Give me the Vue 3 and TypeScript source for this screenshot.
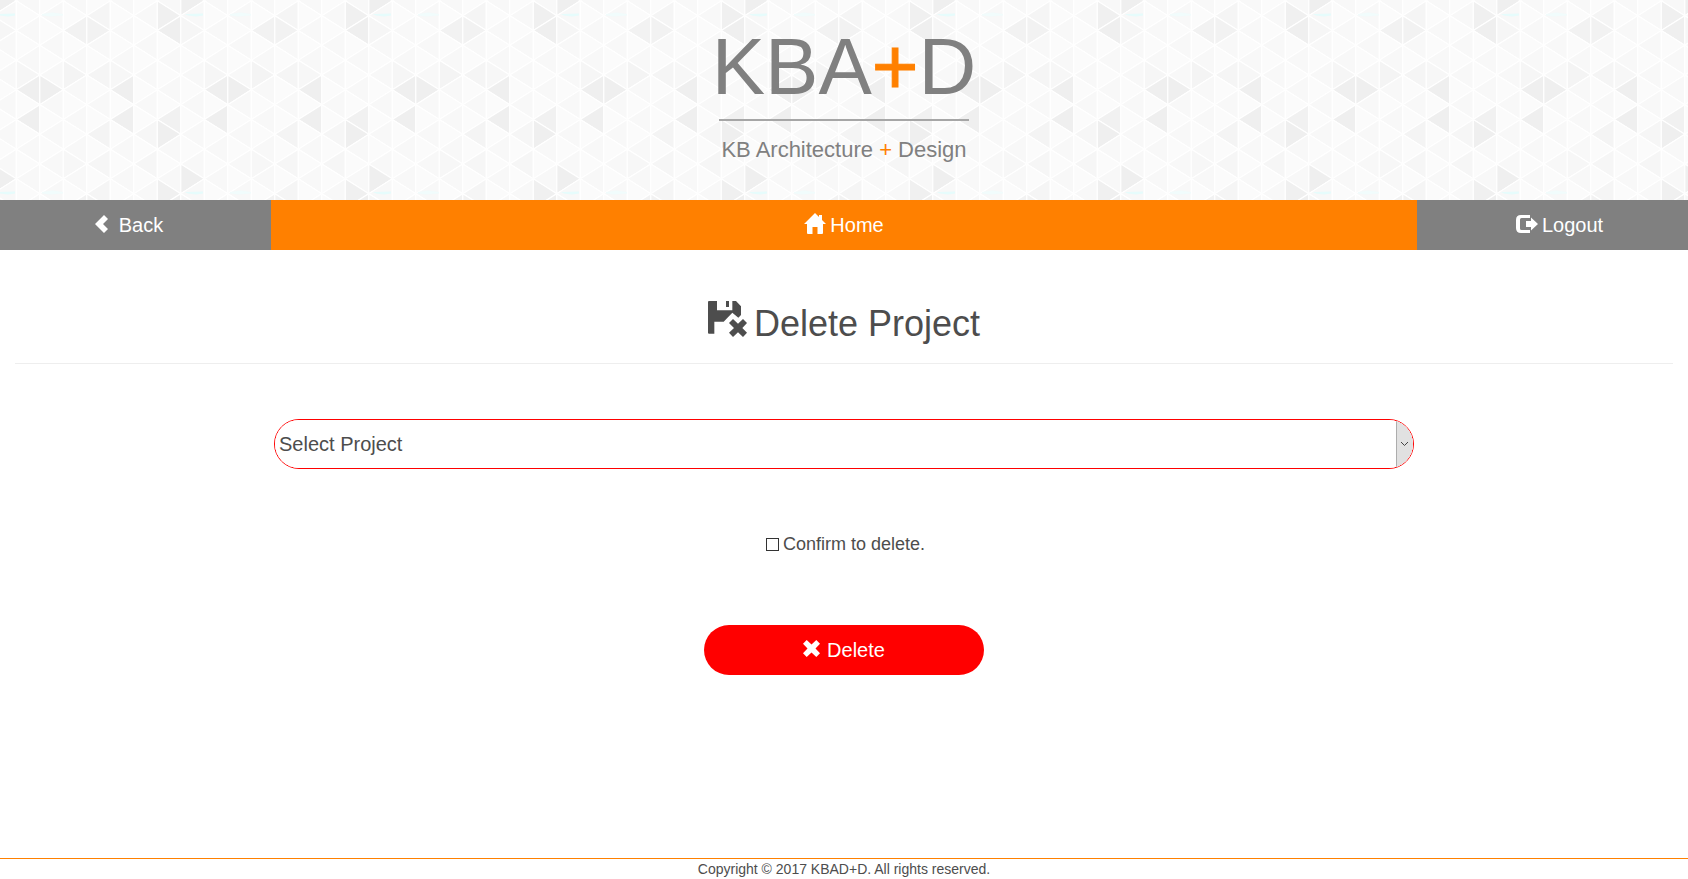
<script setup lang="ts">
import { ref } from 'vue'

interface Facet {
  points: string
  fill: string
}

const TILE_WIDTH = 188
const TILE_HEIGHT = 178
const COLUMN = TILE_WIDTH / 8
const LEVEL = TILE_HEIGHT / 12

// Facets that stand out from the base tint, keyed by "column:level"
const accents: Record<string, string> = {
  '0:5': '#f6f6f6',
  '0:6': '#efefef',
  '0:8': '#efefef',
  '1:6': '#efefef',
  '2:2': '#f2f2f2',
  '2:5': '#f4f4f4',
  '2:11': '#f7f7f7',
  '3:1': '#f5f5f5',
  '3:2': '#f2f2f2',
  '3:5': '#f5f5f5',
  '3:9': '#f4f4f4',
  '3:11': '#f6f6f6',
  '4:5': '#f7f7f7',
  '4:6': '#efefef',
  '4:8': '#efefef',
  '5:9': '#f6f6f6',
  '5:11': '#f6f6f6',
  '6:1': '#f0f0f0',
  '6:2': '#efefef',
  '6:8': '#f1f1f1',
  '6:9': '#efefef',
  '7:0': '#efefef',
  '7:2': '#f6f6f6',
}

function buildFacets(): Facet[] {
  const list: Facet[] = []
  for (let c = -1; c <= 7; c++) {
    for (let n = -1; n <= 13; n++) {
      const left = 16.3 + c * COLUMN
      const right = left + COLUMN
      const y = 0.8 + n * LEVEL
      const pointsLeft = (n + c) % 2 === 0
      const apex = pointsLeft ? left : right
      const base = pointsLeft ? right : left
      const key = `${(c + 8) % 8}:${(n + 12) % 12}`
      list.push({
        points: `${apex},${y} ${base},${y - LEVEL} ${base},${y + LEVEL}`,
        fill: accents[key] ?? (pointsLeft ? '#f8f8f8' : '#fbfbfb'),
      })
    }
  }
  return list
}

const facets = buildFacets()
const project = ref('')
const confirmed = ref(false)
</script>

<template>
  <div class="page">
    <header class="banner">
      <svg class="banner-pattern" aria-hidden="true">
        <defs>
          <pattern id="facets" :width="TILE_WIDTH" :height="TILE_HEIGHT" patternUnits="userSpaceOnUse">
            <polygon
              v-for="(facet, i) in facets"
              :key="i"
              :points="facet.points"
              :fill="facet.fill"
              stroke="#ffffff"
              stroke-width="1.2"
            />
            <path d="M0 14L15 13.500V15.500L8 16.500L0 15.500ZM185 14H188V15.500Z" fill="#e6fcfc" />
            <path d="M42 14L52 12.500L63 14V15.500L50 16.500L42 15.500Z" fill="#f1fcfc" />
          </pattern>
        </defs>
        <rect width="100%" height="100%" fill="url(#facets)" />
      </svg>
      <div class="logo">
        <div class="logo-name">KBA<span class="plus heavy">+</span>D</div>
        <div class="logo-tagline">KB Architecture <span class="plus">+</span> Design</div>
      </div>
    </header>

    <nav class="nav">
      <a class="nav-link back" href="#back">
        <svg class="icon-back" viewBox="0 0 13 18" aria-hidden="true">
          <path d="M9 0L13 4L8 9L13 14L9 18L0 9Z" />
        </svg>
        Back
      </a>
      <a class="nav-link home" href="#home">
        <svg class="icon-home" viewBox="0 0 22 21" aria-hidden="true">
          <path d="M11 0L15 4V2H18V7L22 11H19V20Q19 21 18 21H13.500V14H8.500V21H4Q3 21 3 20V11H0Z" />
        </svg>
        Home
      </a>
      <a class="nav-link logout" href="#logout">
        <svg class="icon-logout" viewBox="0 0 22 18" aria-hidden="true">
          <path d="M14 0V3H5.500Q4 3 4 4.500V13.500Q4 15 5.500 15H14V18H5Q0 18 0 13V5Q0 0 5 0ZM15 2.500L22 9L15 15.500V12H10V6H15Z" />
        </svg>
        Logout
      </a>
    </nav>

    <main class="content">
      <h1 class="title">
        <svg class="icon-project" viewBox="0 0 117 108" aria-hidden="true">
          <path d="M2 0H27V28H73V0H84L99 16V42L91 50L73 35L47 62H19V98H2L0 96V2Z" />
          <path d="M54 0H63V18H54Z" />
          <path d="M75 54L90 68L105 54L117 66L103 81L117 95L105 108L90 94L75 108L63 95L78 81L63 66Z" />
        </svg>
        Delete Project
      </h1>

      <form class="form" @submit.prevent>
        <div class="select-box">
          <select v-model="project" class="select" aria-label="Select Project">
            <option value="">Select Project</option>
          </select>
          <span class="select-arrow" aria-hidden="true">
            <svg viewBox="0 0 9 6"><path d="M1 1L4.500 4.500L8 1" /></svg>
          </span>
        </div>

        <label class="confirm">
          <input v-model="confirmed" class="checkbox" type="checkbox" />
          Confirm to delete.
        </label>

        <button class="delete" type="submit">
          <svg class="icon-delete" viewBox="0 0 17 17" aria-hidden="true">
            <path d="M3.700 0L8.500 4.500L13.300 0L17 3.700L12.500 8.500L17 13.300L13.300 17L8.500 12.500L3.700 17L0 13.300L4.500 8.500L0 3.700Z" />
          </svg>
          Delete
        </button>
      </form>
    </main>

    <footer class="footer">Copyright © 2017 KBAD+D. All rights reserved.</footer>
  </div>
</template>

<style>
body {
  margin: 0;
}
</style>

<style scoped>
.page {
  display: flex;
  flex-direction: column;
  min-height: 100vh;
  background: #ffffff;
  color: #4d4d4d;
  font-family: "Liberation Sans", Arial, sans-serif;
}

.page svg {
  fill: currentColor;
}

.banner {
  position: relative;
  padding: 27px 0 38px;
}

.banner-pattern {
  position: absolute;
  inset: 0;
  width: 100%;
  height: 100%;
}

.logo {
  position: relative;
  display: flex;
  flex-direction: column;
  align-items: center;
  color: #808080;
}

.logo-name {
  font-size: 80px;
  line-height: 80px;
}

.logo-tagline {
  width: 250px;
  margin-top: 12px;
  padding-top: 17px;
  border-top: 2px solid #a6a6a6;
  font-size: 22px;
  line-height: 24px;
  text-align: center;
  white-space: nowrap;
}

.plus {
  color: #ff8000;
}

.heavy {
  -webkit-text-stroke: 1px #ff8000;
}

.nav {
  display: grid;
  grid-template-columns: 1fr min(1146px, 68%) 1fr;
}

.nav-link {
  display: flex;
  align-items: center;
  justify-content: center;
  height: 50px;
  background: #808080;
  color: #ffffff;
  font-size: 20px;
  text-decoration: none;
}

.back {
  gap: 11px;
  padding-right: 13px;
}

.home {
  gap: 4px;
  background: #ff8000;
}

.logout {
  gap: 4px;
  padding-left: 14px;
}

.icon-back {
  width: 13px;
  height: 18px;
  margin-bottom: 2px;
}

.icon-home {
  width: 22px;
  height: 21px;
  margin-bottom: 4px;
}

.icon-logout {
  width: 22px;
  height: 18px;
  margin-bottom: 2px;
}

.content {
  flex: 1;
  padding: 54px 15px 40px;
}

.title {
  display: flex;
  justify-content: center;
  gap: 7px;
  margin: 0;
  padding-bottom: 19px;
  border-bottom: 1px solid #eeeeee;
  font-size: 36px;
  font-weight: 400;
  line-height: 40px;
}

.icon-project {
  width: 39px;
  height: 36px;
  margin-top: -3px;
}

.form {
  display: flex;
  flex-direction: column;
  align-items: center;
  max-width: 1140px;
  margin: 55px auto 0;
}

.select-box {
  position: relative;
  box-sizing: border-box;
  width: 100%;
  height: 50px;
  overflow: hidden;
  border: 1px solid #ff0000;
  border-radius: 25px;
}

.select {
  width: 100%;
  height: 100%;
  padding: 0 20px 0 4px;
  border: 0;
  background: #ffffff;
  color: inherit;
  font: inherit;
  font-size: 20px;
  appearance: none;
}

.select-arrow {
  position: absolute;
  top: 0;
  right: 0;
  bottom: 0;
  display: flex;
  align-items: center;
  justify-content: center;
  box-sizing: border-box;
  width: 17px;
  padding-right: 2px;
  border-left: 1px solid #adadad;
  background: #e1e1e1;
  pointer-events: none;
}

.select-arrow svg {
  width: 9px;
  height: 6px;
  fill: none;
  stroke: #444444;
}

.confirm {
  display: flex;
  align-items: center;
  gap: 4px;
  margin-top: 62px;
  padding-left: 3px;
  font-size: 18px;
  line-height: 26px;
}

.checkbox {
  width: 13px;
  height: 13px;
  margin: 0;
  border: 1px solid #333333;
  background: #ffffff;
  appearance: none;
}

.checkbox:checked {
  background: #333333;
  box-shadow: inset 0 0 0 2px #ffffff;
}

.delete {
  display: flex;
  align-items: center;
  justify-content: center;
  gap: 7px;
  width: 280px;
  height: 50px;
  margin-top: 68px;
  border: 0;
  border-radius: 25px;
  background: #ff0000;
  color: #ffffff;
  font: inherit;
  font-size: 20px;
}

.icon-delete {
  width: 17px;
  height: 17px;
  margin-bottom: 4px;
}

.footer {
  border-top: 1px solid #ff8000;
  font-size: 14px;
  line-height: 20px;
  text-align: center;
}
</style>
